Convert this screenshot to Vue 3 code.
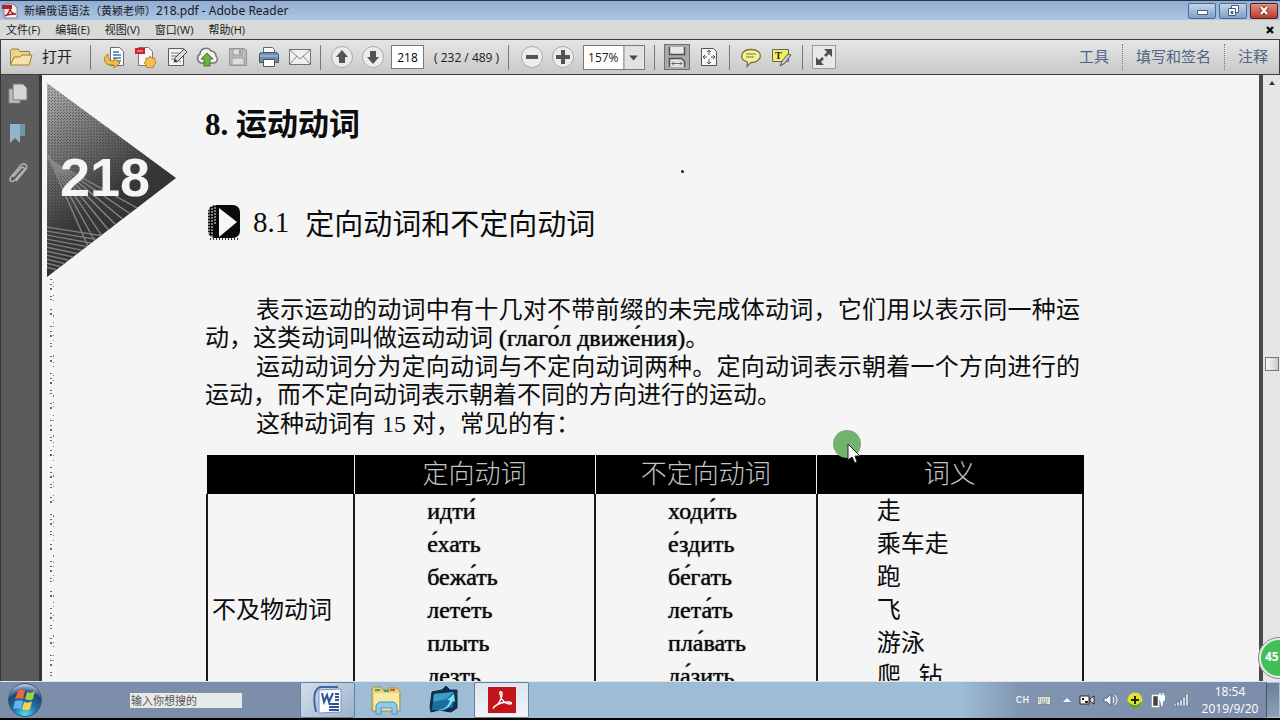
<script setup>
import { ref } from 'vue'

const menus = ['文件(F)', '编辑(E)', '视图(V)', '窗口(W)', '帮助(H)']
const panels = ['工具', '填写和签名', '注释']
const verbs = [
  ['идти́', 'ходи́ть', '走'],
  ['е́хать', 'е́здить', '乘车走'],
  ['бежа́ть', 'бе́гать', '跑'],
  ['лете́ть', 'лета́ть', '飞'],
  ['плыть', 'пла́вать', '游泳'],
  ['лезть', 'ла́зить', '爬   钻'],
]
const page = ref('218')
const zoom = ref('157%')
const query = ref('输入你想搜的')
const fan = [0, 1, 2, 3, 4, 5, 6, 7]
const stripes = Array.from({ length: 11 }, (_, i) => i)
</script>

<template>
  <div class="desktop">
    <header class="titlebar">
      <svg class="logo" width="16" height="16" viewBox="0 0 16 16" aria-hidden="true">
        <path d="M2 1h9l4 4v10H2z" fill="#f5f1f2" stroke="#8d7880" />
        <path d="M0 2h10v4H0z" fill="#b3202c" />
        <path d="M3 13c4-2 5-6 5-9 0 4 2 7 6 7-4 0-8 0-11 2z" fill="none" stroke="#b3202c" stroke-width="1.5" />
      </svg>
      <h1><span>新编俄语语法（黄颖老师）</span>218.pdf - Adobe Reader</h1>
      <div class="winbtns">
        <button aria-label="最小化"><svg width="28" height="15" viewBox="0 0 28 15"><path d="M9.500 7.500h10v4h-10z" fill="#fff" stroke="#4a5c78" /></svg></button>
        <button aria-label="还原"><svg width="28" height="15" viewBox="0 0 28 15"><path d="M12.500 2.500h7v7h-7z" fill="#fff" stroke="#4a5c78" /><path d="M9.500 5.500h7v7h-7z" fill="#fff" stroke="#4a5c78" /><path d="M12 8.500h2v2h-2z" fill="#7e9fc8" stroke="#4a5c78" /></svg></button>
        <button class="close" aria-label="关闭"><svg width="28" height="15" viewBox="0 0 28 15"><path d="M11 4l6 7M17 4l-6 7" stroke="#5a2a2a" stroke-width="4" /><path d="M11 4l6 7M17 4l-6 7" stroke="#fff" stroke-width="2.400" /></svg></button>
      </div>
    </header>

    <nav class="menubar">
      <button v-for="m in menus" :key="m">{{ m }}</button>
      <button class="docclose" aria-label="关闭文档"><svg width="8" height="8" viewBox="0 0 8 8"><path d="M1 1l6 6M7 1L1 7" stroke="#111" stroke-width="2.400" /></svg></button>
    </nav>

    <div class="toolbar">
      <button class="open">
        <svg width="24" height="20" viewBox="0 0 24 20"><path d="M1.500 17V3.500L3 2h6l2 2.500h9.500V8" fill="#ecd591" stroke="#9b7d35" /><path d="M1.500 18L5 10h6l2-2h10l-3 10z" fill="#f6e3a6" stroke="#9b7d35" /></svg>
        <span>打开</span>
      </button>
      <i class="rule"></i>
      <div class="group files">
        <button aria-label="转换"><svg width="24" height="24" viewBox="0 0 24 24"><path d="M8.500 2.500h9l4 4v14h-13z" fill="#fdfdfd" stroke="#656b74" /><path d="M11 7h6M11 10h8M11 13h8M13 16h6" stroke="#3d78b8" stroke-width="1.500" /><path d="M6 9c-5 3-5 9 1 11h5v3l6-5-6-5v3c-5 0-6-2-6-7z" fill="#f1bd48" stroke="#a87a21" /></svg></button>
        <button aria-label="创建 PDF"><svg width="24" height="24" viewBox="0 0 24 24"><path d="M5.500 2.500h10l4 4v14h-14z" fill="#f8f8f8" stroke="#777" /><path d="M2 3h10v6H2z" fill="#cf222f" /><path d="M4 6h6" stroke="#f7c6c8" /><path d="M17 11l2 2 3 0v3l1 2-2 2-1 3-3-1-3 1-1-3-2-2 2-2 0-3h3z" fill="#f0bf55" stroke="#bd8a2c" /></svg></button>
        <button aria-label="编辑"><svg width="24" height="24" viewBox="0 0 24 24"><path d="M4.500 3.500h15v17h-15z" fill="#f5f5f5" stroke="#5e5e5e" /><path d="M7 8h8M7 11h6M7 14h3M12 18l2-3 3 2" fill="none" stroke="#777" /><path d="M10 17l1-4L20 4l3 3-9 9z" fill="#ddd" stroke="#444" /><path d="M10 17l1-3 2 2z" fill="#333" /></svg></button>
        <button aria-label="上传"><svg width="24" height="24" viewBox="0 0 24 24"><path d="M6 18a5 5 0 0 1-1-9 6 6 0 0 1 11-3 5 5 0 0 1 5 5 4 4 0 0 1-2 7z" fill="#f2f2f2" stroke="#777" stroke-width="1.500" /><path d="M12 8l6 6h-3v7H9v-7H6z" fill="#6db43e" stroke="#427d22" /></svg></button>
        <button aria-label="保存"><svg width="24" height="24" viewBox="0 0 24 24"><path d="M3.500 3.500h15l2 2v15h-17z" fill="#bbb" stroke="#949494" /><path d="M7 4h9v6H7zM6 13h12v7H6z" fill="#ddd" stroke="#999" /><path d="M13 5h2v4h-2z" fill="#999" /></svg></button>
        <button aria-label="打印"><svg width="24" height="24" viewBox="0 0 24 24"><path d="M6.500 9V2.500h9l2 2V9" fill="#fafafa" stroke="#666" /><path d="M2.500 9.500c0-2 2-2 3-2h13c2 0 3 1 3 3v7h-19z" fill="#6e8cab" stroke="#405671" /><path d="M3 11h18" stroke="#bed0e2" /><path d="M6.500 14.500h11v7h-11z" fill="#fff" stroke="#555" /></svg></button>
        <button aria-label="邮件"><svg width="24" height="24" viewBox="0 0 24 24"><path d="M1.500 4.500h21v15h-21z" fill="#f0f0f0" stroke="#707070" /><path d="M2 5l10 9L22 5M2 19l7-8M22 19l-7-8" fill="none" stroke="#888" /></svg></button>
      </div>
      <i class="rule"></i>
      <div class="group">
        <button aria-label="上一页"><svg width="24" height="24" viewBox="0 0 24 24"><circle cx="12" cy="12" r="10.500" fill="#ececec" stroke="#aaa" /><path d="M12 5l6 7h-3v6H9v-6H6z" fill="#515458" /></svg></button>
        <button aria-label="下一页"><svg width="24" height="24" viewBox="0 0 24 24"><circle cx="12" cy="12" r="10.500" fill="#ececec" stroke="#aaa" /><path d="M12 19l6-7h-3V6H9v6H6z" fill="#515458" /></svg></button>
      </div>
      <label class="pageno"><input v-model="page" aria-label="页码" /><span>( 232 / 489 )</span></label>
      <i class="rule"></i>
      <div class="group">
        <button aria-label="缩小"><svg width="24" height="24" viewBox="0 0 24 24"><circle cx="12" cy="12" r="10.500" fill="#ececec" stroke="#aaa" /><path d="M6 10h12v4H6z" fill="#515458" /></svg></button>
        <button aria-label="放大"><svg width="24" height="24" viewBox="0 0 24 24"><circle cx="12" cy="12" r="10.500" fill="#ececec" stroke="#aaa" /><path d="M10 5h4v5h5v4h-5v5h-4v-5H5v-4h5z" fill="#515458" /></svg></button>
      </div>
      <div class="zoom">
        <select v-model="zoom" aria-label="缩放"><option>157%</option></select>
        <svg width="21" height="24" viewBox="0 0 21 24" aria-hidden="true"><path d="M0 0h21v24H0z" fill="#e2e2e2" /><path d="M.5 0v24" stroke="#777" /><path d="M6 10h9l-4.500 5z" fill="#4a4a4a" /></svg>
      </div>
      <i class="rule"></i>
      <div class="group marks">
        <button class="pressed" aria-label="适合宽度"><svg width="24" height="24" viewBox="0 0 24 24"><path d="M4.500 2v7.500h15V2M4.500 22v-8.500h12l3 3V22" fill="#e6e6e6" stroke="#505050" stroke-width="1.500" /><path d="M7 18.500h10M9 16.500l-2 2 2 2M15 16.500l2 2-2 2" fill="none" stroke="#667" /></svg></button>
        <button aria-label="适合页面"><svg width="24" height="24" viewBox="0 0 24 24"><path d="M4.500 3.500h12l3 3v14h-15z" fill="#f8f8f8" stroke="#555" /><path d="M12 5v5M12 14v5M6 12h4M14 12h4M10 7l2-2 2 2M10 17l2 2 2-2M8 10l-2 2 2 2M16 10l2 2-2 2" fill="none" stroke="#555" /></svg></button>
      </div>
      <i class="rule"></i>
      <div class="group marks">
        <button aria-label="添加附注"><svg width="24" height="24" viewBox="0 0 24 24"><path d="M12 4.500c13 0 12 13 0 13l-4 4 .5-4.500C-1 14 2 4.500 12 4.500z" fill="#f7f29a" stroke="#74743f" stroke-width="1.300" /><path d="M7 9h10M7 12h8" stroke="#777744" /></svg></button>
        <button aria-label="高亮文本"><svg width="24" height="24" viewBox="0 0 24 24"><path d="M2.500 4.500h16v12h-16z" fill="#eef062" stroke="#666" /><text x="5" y="14" class="tglyph">T</text><path d="M10 21l2-5 6-7 3 1-6 8z" fill="#ccc" stroke="#555" /></svg></button>
      </div>
      <i class="rule"></i>
      <div class="group">
        <button class="full" aria-label="阅读模式"><svg width="22" height="22" viewBox="0 0 22 22"><path d="M11 3h8v8l-3-3-3 3-2-2 3-3zM3 19v-8l3 3 3-3 2 2-3 3 3 3z" fill="#4d4f52" /></svg></button>
      </div>
      <div class="panels"><button v-for="p in panels" :key="p">{{ p }}</button></div>
    </div>

    <main class="workspace">
      <aside class="rail">
        <button aria-label="页面缩略图"><svg width="22" height="24" viewBox="0 0 22 24"><path d="M2 7h11v14H2z" fill="#bfbfbf" stroke="#888" /><path d="M6 2h10l4 4v12H6z" fill="#d5d5d5" stroke="#777" /></svg></button>
        <button aria-label="书签"><svg width="22" height="24" viewBox="0 0 22 24"><path d="M10 2h8v12h-8z" fill="#6f97b0" /><path d="M3 2h10v19l-5-5-5 5z" fill="#93b5c9" /></svg></button>
        <button aria-label="附件"><svg width="22" height="24" viewBox="0 0 22 24"><path d="M6 15l8-9c2-2 4 0 3 2L8 18c-3 3-7 1-4-3L14 3c3-3 7 0 5 4L9 19" fill="none" stroke="#b5b5b5" stroke-width="1.500" /></svg></button>
      </aside>

      <section class="sheet">
        <div class="margin">
          <svg width="132" height="200" viewBox="0 0 132 200">
            <defs>
              <linearGradient id="shade" x1="0" y1="0" x2="0.5" y2="1">
                <stop offset="0" stop-color="#b4b4b4" />
                <stop offset="0.35" stop-color="#747474" />
                <stop offset="0.65" stop-color="#3c3c3c" />
                <stop offset="1" stop-color="#2c2c2c" />
              </linearGradient>
              <pattern id="dots" width="3" height="3" patternUnits="userSpaceOnUse"><path d="M0 0h1v1H0zM2 1h1v1H2z" fill="#222" opacity="0.45" /></pattern>
              <clipPath id="tri"><path d="M1 4L130 99 1 198z" /></clipPath>
            </defs>
            <g clip-path="url(#tri)">
              <path d="M0 0h132v200H0z" fill="url(#shade)" />
              <path d="M0 0h132v200H0z" fill="url(#dots)" />
              <path v-for="i in fan" :key="i" :d="`M0 ${72 + i} L${44 + i * 7} ${172 - i * 6}`" stroke="#888" stroke-width="1.300" />
              <path v-for="i in stripes" :key="'s' + i" :d="`M0 ${148 + i * 4} L90 ${162 + i * 5}`" stroke="#808080" stroke-width="1.300" />
            </g>
            <text x="14" y="117" class="bignum">218</text>
          </svg>
          <svg class="specks" width="8" height="400" viewBox="0 0 8 400" aria-hidden="true">
            <path d="M3 0v400" stroke="#666" stroke-width="2" stroke-dasharray="1 4 1 3 2 6 1 2 1 9 1 3 2 11" />
            <path d="M5.500 3v390" stroke="#777" stroke-dasharray="1 3 1 8 1 4 1 14 2 5" />
          </svg>
        </div>
        <article>
          <h2>8. 运动动词</h2>
          <h3>
            <svg width="36" height="38" viewBox="0 0 36 38" aria-hidden="true">
              <rect x="3" y="2" width="32" height="33" rx="7" fill="#0b0b0b" />
              <path d="M14 5l18 14-18 15z" fill="#f6f6f6" />
              <path d="M4 5v29M7 2v34M10 1v20" stroke="#f6f6f6" stroke-dasharray="2 1" />
              <path d="M5 36h28" stroke="#333" stroke-width="2" stroke-dasharray="1 2" />
            </svg>
            <span>8.1</span><span class="sub">定向动词和不定向动词</span>
          </h3>
          <div class="prose">
            <p>表示运动的动词中有十几对不带前缀的未完成体动词，它们用以表示同一种运动，这类动词叫做运动动词 <span class="term">(глаго́л движе́ния)</span>。</p>
            <p>运动动词分为定向动词与不定向动词两种。定向动词表示朝着一个方向进行的运动，而不定向动词表示朝着不同的方向进行的运动。</p>
            <p>这种动词有 15 对，常见的有：</p>
          </div>
          <table>
            <colgroup><col class="c1" /><col class="c2" /><col class="c3" /><col class="c4" /></colgroup>
            <thead><tr><th></th><th>定向动词</th><th>不定向动词</th><th>词义</th></tr></thead>
            <tbody>
              <tr v-for="(v, i) in verbs" :key="v[0]">
                <th v-if="i === 0" class="kind" :rowspan="verbs.length" scope="rowgroup">不及物动词</th>
                <td class="ru">{{ v[0] }}</td>
                <td class="ru">{{ v[1] }}</td>
                <td class="zh">{{ v[2] }}</td>
              </tr>
            </tbody>
          </table>
        </article>
        <i class="fleck"></i>
        <svg class="pointer" width="30" height="34" viewBox="0 0 30 34" aria-hidden="true">
          <circle cx="14" cy="14" r="14" fill="#71b36e" />
          <path d="M15 14v16l4-3 3 6 2-1-2-6h5z" fill="#fff" stroke="#222" />
        </svg>
      </section>

      <div class="scroll">
        <svg width="16" height="16" viewBox="0 0 16 16" aria-hidden="true"><path d="M5 10l3-4 3 4z" fill="#333" /></svg>
        <i class="thumb"></i>
      </div>
      <div class="ball">45</div>
    </main>

    <footer class="taskbar">
      <button class="start" aria-label="开始">
        <svg width="36" height="36" viewBox="0 0 36 36">
          <defs><radialGradient id="orb" cx="0.5" cy="0.95" r="0.9"><stop offset="0" stop-color="#4fe0f5" /><stop offset="0.4" stop-color="#1b75ad" /><stop offset="0.75" stop-color="#1c4672" /><stop offset="1" stop-color="#a8c0d4" /></radialGradient></defs>
          <circle cx="18" cy="18" r="16.500" fill="url(#orb)" stroke="#3d5776" />
          <path d="M11 9c3-2 5-1 7 0l-2 8c-3-1-5-1-8 0z" fill="#f0663a" />
          <path d="M20 10c3 1 5 1 8-1l-2 8c-3 2-5 1-8 0z" fill="#9bcf45" />
          <path d="M8 19c3-1 5-1 8 0l-2 8c-3-1-5-1-8 0z" fill="#62b5ee" />
          <path d="M17 20c3 1 6 1 8-1l-2 8c-2 2-5 1-8 0z" fill="#fbd34b" />
        </svg>
      </button>
      <input v-model="query" class="search" aria-label="搜索" />
      <div class="apps">
        <button class="active" aria-label="Word">
          <svg width="32" height="30" viewBox="0 0 32 30"><path d="M4 27C1 14 1 5 8 2h18" fill="none" stroke="#3f66a6" stroke-width="2" /><path d="M7 5l22-1v23l-22 1z" fill="#fff" stroke="#7d95bd" /><path d="M10 8l2 9 3-7 2 7 4-9" fill="none" stroke="#2d5599" stroke-width="2" /><path d="M23 9h4M23 12h4M23 15h4M17 19h10M17 22h10M17 25h10" stroke="#2d5599" stroke-width="2" /></svg>
        </button>
        <button aria-label="资源管理器">
          <svg width="32" height="30" viewBox="0 0 32 30"><path d="M2 4l2-2h7l2 3h5l1-2h8l3 3v20H2z" fill="#e9cf77" stroke="#a98f42" /><path d="M4 8h25v17H4z" fill="#f8e9a4" /><path d="M5 5h5M14 6h5" stroke="#48a34a" stroke-width="2" /><path d="M20 5h5" stroke="#c65a3b" stroke-width="2" /><path d="M6 29V20l3-3h15l3 3v9h-5v-6H11v6z" fill="#8fcbe8" stroke="#4c92bd" /></svg>
        </button>
        <button aria-label="应用">
          <svg width="32" height="30" viewBox="0 0 32 30"><path d="M4 7l10-2 4-4 4 4 7 0 0 18-6 4-12-2-8 2-1-5z" fill="#12304a" stroke="#0f2a42" /><path d="M6 9l20-2-1 15-13 3-8 0z" fill="#1a6f9f" /><path d="M6 9l20-2-8 7-13 3z" fill="#3f9cc4" /><path d="M9 25c8 0 12-5 13-10l-3 0 7-6 1 8-2-1C22 22 16 27 9 25z" fill="#79e0f2" /></svg>
        </button>
        <button class="active bright" aria-label="Adobe Reader">
          <svg width="28" height="26" viewBox="0 0 28 26"><path d="M0 0h28v26H0z" fill="#c1141b" /><path d="M6 20c5-2 8-9 8-13 0-3-3-3-2 0 1 6 5 10 10 10 2 0 2-2-1-2-5 0-10 1-14 4-2 2-2 3-1 1z" fill="none" stroke="#fff" stroke-width="1.500" /></svg>
        </button>
      </div>
      <div class="tray">
        <span class="lang">CH</span>
        <svg width="14" height="10" viewBox="0 0 14 10"><path d="M.5 1.500h13v8H.5z" fill="#dbe1d8" stroke="#7e8c8d" /><path d="M2 4h10M2 6h10" stroke="#77877f" stroke-dasharray="1 1" /><path d="M4 8h6" stroke="#77877f" /></svg>
        <svg width="8" height="6" viewBox="0 0 8 6"><path d="M0 5l4-4 4 4z" fill="#f4f7ff" /></svg>
        <svg width="16" height="14" viewBox="0 0 16 14"><path d="M1 3h9v8H1z" fill="#fff" stroke="#222" /><path d="M11 6l4-3v8l-4-3z" fill="#eee" stroke="#222" /><path d="M3 5h2v2H3zM6 8h3v2H6z" fill="#222" /></svg>
        <svg width="16" height="14" viewBox="0 0 16 14"><path d="M1 5h3l4-4v12L4 9H1z" fill="#f4f5f7" stroke="#59677b" /><path d="M10 4q2 3 0 6M12 2q4 5 0 10" fill="none" stroke="#fff" /></svg>
        <svg width="16" height="16" viewBox="0 0 16 16"><circle cx="8" cy="8" r="7.500" fill="#e4e22a" /><path d="M1 9c3 5 9 6 14 0-1 9-13 9-14 0z" fill="#53a12e" /><path d="M8 4v8M4 8h8" stroke="#182c0c" stroke-width="2" /></svg>
        <svg width="14" height="16" viewBox="0 0 14 16"><path d="M1.500 3.500h6v11h-6z" fill="#444" stroke="#fff" stroke-width="1.500" /><path d="M9 1v3M12 1v3M7 4h7v3l-3 3v4" fill="#fff" stroke="#fff" stroke-width="1.500" /></svg>
        <svg width="16" height="14" viewBox="0 0 16 14"><path d="M1 11h2v2H1zM4 9h2v4H4zM7 7h2v6H7zM10 4h2v9h-2zM13 1h2v12h-2z" fill="#fff" stroke="#4e5c74" stroke-width=".5" /></svg>
      </div>
      <time>18:54<br />2019/9/20</time>
      <button class="peek" aria-label="显示桌面"></button>
    </footer>
  </div>
</template>

<style>
html, body { margin: 0; overflow: hidden; background: #000; }
</style>

<style scoped>
* { box-sizing: border-box; }
.desktop { height: 100vh; display: flex; flex-direction: column; font-family: "Open Sans", "Noto Sans CJK SC", sans-serif; font-size: 12px; color: #1a1a1a; overflow: hidden; }
button { border: 0; background: none; padding: 0; margin: 0; font: inherit; color: inherit; display: flex; align-items: center; justify-content: center; }
svg { display: block; flex: none; }
h1, h2, h3, p { margin: 0; font-weight: 400; }

.titlebar { height: 20px; flex: none; display: flex; align-items: center; padding-left: 2px; border-top: 1px solid #24344f; background: linear-gradient(#93add0, #a9c4e4); }
.titlebar h1 { font: 12px/18px "Noto Sans", "Noto Sans CJK SC", sans-serif; margin-left: 6px; white-space: nowrap; }
.titlebar h1 span { font-size: 11px; }
.winbtns { margin-left: auto; display: flex; gap: 3px; padding-right: 2px; }
.winbtns button { width: 28px; height: 16px; border: 1px solid #4f6a8f; border-radius: 2px; background: linear-gradient(#c3d6ec, #7f9fc9); overflow: hidden; }
.winbtns .close { border-color: #521c22; background: linear-gradient(#dd9184, #b93a2b); }

.menubar { height: 19px; flex: none; display: flex; align-items: center; gap: 15px; padding: 0 6px; background: #d7dbd7; font-size: 11px; }
.menubar button { line-height: 18px; }
.menubar .docclose { margin-left: auto; }

.toolbar { height: 36px; flex: none; display: flex; align-items: center; border: 1px solid #3c3c3c; background: linear-gradient(#e6e6e6, #c8c8c8); padding: 0 0 0 8px; }
.open { gap: 9px; font-size: 15px; color: #222; }
.open span { padding-bottom: 3px; }
.rule { width: 1px; height: 25px; background: #777; margin: 0 11px; flex: none; }
.open + .rule { margin: 0 11px 0 18px; }
.group { display: flex; align-items: center; gap: 7px; }
.files + .rule { margin: 0 9px 0 8px; }
.marks + .rule { margin: 0 9px 0 8px; }
.pageno { display: flex; align-items: center; gap: 10px; margin: 0 1px 0 6px; }
.pageno span { width: 62px; white-space: nowrap; }
.pageno input { width: 33px; height: 24px; border: 1px solid #777; background: #fff; text-align: center; font: inherit; padding: 0; }
.zoom { position: relative; width: 62px; margin-left: 8px; border: 1px solid #777; background: #fff; height: 25px; }
.zoom select { appearance: none; width: 100%; height: 23px; border: 0; background: none; font: inherit; padding: 0 0 0 4px; color: inherit; }
.zoom svg { position: absolute; right: 0; top: 0; pointer-events: none; height: 23px; }
.zoom + .rule { margin: 0 9px; }
.pressed { background: #aaa; border: 1px solid #707070; }
.full { border: 1px solid #999; background: #e8e8e8; }
.tglyph { font: bold 10px "Liberation Serif", serif; fill: #222; }
.panels { margin-left: auto; display: flex; font-size: 15px; color: #4f6585; }
.panels button { height: 26px; padding: 0 13px 3px; white-space: nowrap; }
.panels button + button { border-left: 1px dotted #777; }
.panels button:last-child { padding-right: 11px; }

.workspace { flex: 1; min-height: 0; display: flex; position: relative; background: #f5f5f5; overflow: hidden; }
.rail { width: 42px; flex: none; background: #5b5b5b; border-left: 1px solid #333; border-right: 3px solid #353535; padding: 7px 0 0 6px; display: flex; flex-direction: column; gap: 16px; align-items: flex-start; }
.sheet { flex: 1; min-width: 0; position: relative; display: flex; background: #f5f5f6; padding-left: 4px; border-right: 4px solid #4a4a4a; overflow: hidden; }
.margin { width: 132px; flex: none; padding-top: 4px; }
.specks { margin: 0 0 0 2px; }
.bignum { font: bold 54px "Liberation Sans", Arial, sans-serif; fill: #f4f4f4; }
article { flex: 1; min-width: 0; padding: 27px 176px 0 27px; font-family: "Liberation Serif", "Noto Sans CJK SC", serif; color: #0c0c0c; }
h2 { font-size: 31px; line-height: 46px; font-weight: 700; }
h3 { display: flex; align-items: center; height: 42px; margin-top: 53px; font-size: 29px; }
h3 span { margin-left: 12px; }
h3 .sub { margin-left: 16px; }
.prose { margin-top: 53px; padding-right: 3px; font-size: 24px; line-height: 28px; text-align: justify; }
.prose p { text-indent: 51px; margin-bottom: 1px; }
.term { text-shadow: 0 0 1px #0c0c0c; }
table { width: 100%; margin: 17px 0 0 1px; border-collapse: collapse; table-layout: fixed; font-size: 24px; }
.c1 { width: 16.8%; } .c2 { width: 27.5%; } .c3 { width: 25.3%; } .c4 { width: 30.4%; }
thead th { height: 39px; padding: 0; background: #000; color: #c4c4c4; font-size: 26px; line-height: 37px; font-weight: 300; border-right: 1px solid #eee; }
thead th:last-child { border-right-color: #000; }
tbody td, .kind { height: 33px; padding: 2px 0 0; line-height: 31px; border-left: 2px solid #1a1a1a; border-right: 2px solid #1a1a1a; text-align: left; font-weight: 400; white-space: pre; }
tbody .kind { padding: 34px 0 0 4px; }
tbody .ru { padding-left: 72px; text-shadow: 0 0 1px #0c0c0c; }
tbody .zh { padding-left: 59px; }
.fleck { position: absolute; left: 639px; top: 95px; width: 3px; height: 3px; border-radius: 50%; background: #222; }
.pointer { position: absolute; left: 791px; top: 355px; }
.scroll { width: 17px; flex: none; background: #e6e6e6; display: flex; flex-direction: column; align-items: center; }
.thumb { width: 14px; height: 14px; margin-top: 266px; border: 1px solid #777; background: linear-gradient(90deg, #fafafa, #c9c9c9); }
.ball { position: absolute; right: -20px; bottom: 2px; width: 42px; height: 42px; border: 3px solid #e3eee3; outline: 1px solid #888; outline-offset: -1px; border-radius: 50%; background: #42bd58; color: #fff; font-weight: 700; line-height: 34px; padding-left: 4px; }

.taskbar { height: 39px; flex: none; display: flex; align-items: center; border-top: 1px solid #dbe6f2; border-bottom: 2px solid #000; background: linear-gradient(90deg, #7c8ea9 0 300px, #9ebdd4 320px 960px, #8095b0 1020px, #7c8ca8); }
.start { margin-left: 7px; }
.search { width: 112px; height: 15px; margin-left: 87px; border: 0; padding: 0 1px; background: #e8e9ea; color: #555; font: 11px/15px "Noto Sans CJK SC", sans-serif; }
.apps { display: flex; align-self: stretch; margin-left: 58px; gap: 3px; }
.apps button { width: 55px; border-radius: 2px; }
.apps .active { border: 1px solid #66809c; background: linear-gradient(135deg, #d4deea, #9eb3cb); }
.apps .bright { background: linear-gradient(#dce6f0, #f0f3f6); }
.tray { margin-left: auto; display: flex; align-items: center; gap: 8px; }
.lang { font: 11px "Liberation Mono", monospace; color: #fff; }
.tray svg:nth-of-type(1) { margin-right: 4px; }
time { width: 64px; margin-left: 9px; text-align: center; font-size: 12px; line-height: 17px; color: #fff; }
.peek { width: 14px; align-self: stretch; margin-left: 4px; border: 1px solid #b2c0d0; border-left-color: #43536d; background: linear-gradient(#68809a, #8fa0b6); }
</style>
